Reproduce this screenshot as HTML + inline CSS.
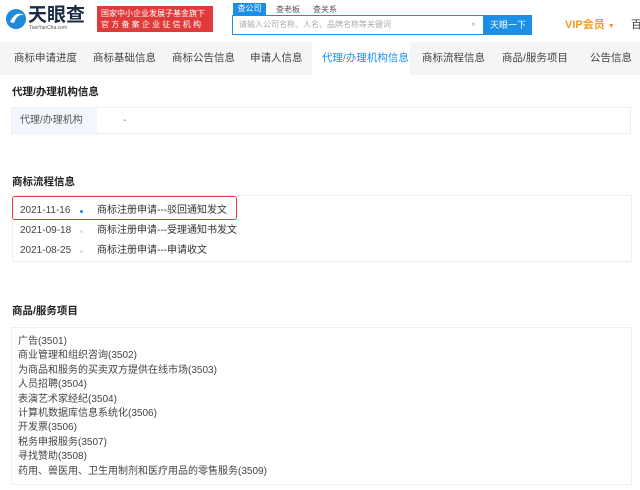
<!DOCTYPE html><html><head><meta charset="utf-8"><style>
*{margin:0;padding:0;box-sizing:border-box}
body{width:640px;height:490px;overflow:hidden;background:#fff;font-family:"Liberation Sans","Noto Sans CJK SC",sans-serif;font-size:10px;color:#333;position:relative;line-height:12px}
.a{position:absolute;white-space:nowrap}
.nav{position:absolute;top:42px;left:0;width:640px;height:33px;background:#f4f5f7}
.nav span{position:absolute;top:10px;font-size:10.5px;color:#444}
.t{font-weight:bold;font-size:10.5px;color:#222}
.box{position:absolute;border:1px solid #eceef2}
</style></head><body>
<svg class="a" style="left:5px;top:8px" width="22" height="22" viewBox="0 0 22 22"><circle cx="11" cy="11" r="10" fill="#1f8ad8"/><path d="M5 14 Q11 2 19 7 Q12 6 9 15Z" fill="#fff"/></svg>
<div class="a" style="left:28px;top:5px;font-size:19px;line-height:22px;font-weight:bold;color:#1c2a44">天眼查</div>
<div class="a" style="left:29px;top:25px;font-size:5px;line-height:6px;color:#555">TianYanCha.com</div>
<div class="a" style="left:97px;top:6px;width:116px;height:26px;background:#e03a3a;color:#fff;font-size:8px;line-height:11px;padding:2px 4px">国家中小企业发展子基金旗下<br>官 方 备 案 企 业 征 信 机 构</div>
<div class="a" style="left:233px;top:3px;width:33px;height:12px;background:#1a8fe8;color:#fff;font-size:8px;text-align:center;line-height:12px">查公司</div>
<div class="a" style="left:276px;top:4px;font-size:8px;color:#555">查老板</div>
<div class="a" style="left:313px;top:4px;font-size:8px;color:#555">查关系</div>
<div class="a" style="left:232px;top:15px;width:252px;height:20px;border:1px solid #1a8fe8;font-size:8px;line-height:10px;color:#aaa;padding:4px 6px">请输入公司名称、人名、品牌名称等关键词<span style="position:absolute;left:238px">×</span></div>
<div class="a" style="left:484px;top:15px;width:48px;height:20px;background:#1a8fe8;color:#fff;font-size:9px;text-align:center;line-height:20px">天眼一下</div>
<div class="a" style="left:565px;top:19px;font-size:11px;font-weight:bold;color:#f39a1f">VIP会员 <span style="font-size:7px">▼</span></div>
<div class="a" style="left:631px;top:19px;font-size:11px">百</div>
<div class="nav">
<span style="left:14px">商标申请进度</span><span style="left:93px">商标基础信息</span><span style="left:172px">商标公告信息</span><span style="left:250px">申请人信息</span>
<div style="position:absolute;left:312px;top:0;width:98px;height:33px;background:#fff"></div>
<span style="left:322px;color:#1a8fe8">代理/办理机构信息</span><span style="left:422px">商标流程信息</span><span style="left:502px">商品/服务项目</span><span style="left:590px">公告信息</span></div>
<div class="a t" style="left:12px;top:86px">代理/办理机构信息</div>
<div class="box" style="left:11px;top:107px;width:620px;height:27px"></div>
<div class="a" style="left:12px;top:108px;width:85px;height:25px;background:#f2f7fd"></div>
<div class="a" style="left:20px;top:115px;color:#555">代理/办理机构</div>
<div class="a" style="left:123px;top:115px;color:#777">-</div>
<div class="a t" style="left:12px;top:176px">商标流程信息</div>
<div class="box" style="left:12px;top:195px;width:620px;height:67px"></div>
<div class="a" style="left:12px;top:196px;width:225px;height:24px;border:1.5px solid #e53a3a;border-radius:3px"></div>
<div class="a" style="left:20px;top:205px;color:#444">2021-11-16</div><div class="a" style="left:80px;top:210px;width:3px;height:3px;border-radius:50%;background:#1a8fe8"></div><div class="a" style="left:97px;top:205px">商标注册申请---驳回通知发文</div>
<div class="a" style="left:20px;top:225px;color:#444">2021-09-18</div><div class="a" style="left:80px;top:230px;width:3px;height:3px;border-radius:50%;background:#cfe3f5"></div><div class="a" style="left:97px;top:225px">商标注册申请---受理通知书发文</div>
<div class="a" style="left:20px;top:245px;color:#444">2021-08-25</div><div class="a" style="left:80px;top:250px;width:3px;height:3px;border-radius:50%;background:#cfe3f5"></div><div class="a" style="left:97px;top:245px">商标注册申请---申请收文</div>
<div class="a t" style="left:12px;top:305px">商品/服务项目</div>
<div class="box" style="left:11px;top:327px;width:621px;height:158px"></div>
<div class="a" style="left:18px;top:335px;line-height:14.4px;color:#444">广告(3501)<br>商业管理和组织咨询(3502)<br>为商品和服务的买卖双方提供在线市场(3503)<br>人员招聘(3504)<br>表演艺术家经纪(3504)<br>计算机数据库信息系统化(3506)<br>开发票(3506)<br>税务申报服务(3507)<br>寻找赞助(3508)<br>药用、兽医用、卫生用制剂和医疗用品的零售服务(3509)</div>
</body></html>
